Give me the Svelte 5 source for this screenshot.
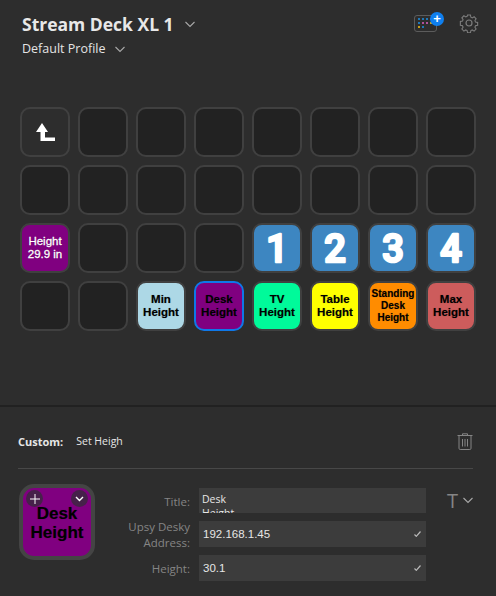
<script>
  const keys = [
    { type: 'back' }, {}, {}, {}, {}, {}, {}, {},
    {}, {}, {}, {}, {}, {}, {}, {},
    { color: '#800080', lines: ['Height', '29.9 in'], light: true }, {}, {}, {},
    { color: '#3d86c1', num: '1' }, { color: '#3d86c1', num: '2' }, { color: '#3d86c1', num: '3' }, { color: '#3d86c1', num: '4' },
    {}, {},
    { color: '#add8e6', lines: ['Min', 'Height'] },
    { color: '#800080', lines: ['Desk', 'Height'], selected: true },
    { color: '#00fa9a', lines: ['TV', 'Height'] },
    { color: '#ffff00', lines: ['Table', 'Height'] },
    { color: '#ff8c00', lines: ['Standing', 'Desk', 'Height'], small: true },
    { color: '#cd5c5c', lines: ['Max', 'Height'] }
  ];

  const dots = ['#1f78b8', '#1f78b8', '#1f78b8', '#b0509c', '#1f78b8', '#1f78b8', '#b0509c', '#b0509c', '#c8a018', '#c8a018', '#c8a018', '#1f78b8'];
</script>

<div class="app">
  <header>
    <div class="heading">
      <div class="device">
        <span>Stream Deck XL 1</span>
        <svg width="10" height="7" viewBox="0 0 10 7"><path d="M.5 1L5 5.500 9.500 1" class="chev" /></svg>
      </div>
      <div class="profile">
        <span>Default Profile</span>
        <svg width="10" height="7" viewBox="0 0 10 7"><path d="M.5 1L5 5.500 9.500 1" class="chev" /></svg>
      </div>
    </div>
    <div class="tools">
      <div class="store">
        <div class="kbd">
          {#each dots as d}
            <i style="background: {d}"></i>
          {/each}
        </div>
        <span class="plus">+</span>
      </div>
      <svg width="20" height="20" viewBox="0 0 20 20" fill="none" stroke="#7d7d7d" stroke-width="1.2">
        <circle cx="10" cy="10" r="3" />
        <path d="M8.4 1.2h3.2l.5 2.4 1.5.7 2.1-1.3 2.2 2.3-1.3 2 .6 1.6 2.4.5v3.2l-2.4.5-.6 1.6 1.3 2-2.2 2.3-2.100-1.300-1.500.7-.5 2.400H8.400l-.5-2.400-1.500-.7-2.100 1.300-2.200-2.300 1.300-2-.6-1.600-2.400-.5V8.400l2.400-.5.6-1.600-1.300-2 2.200-2.300 2.100 1.300 1.500-.7z" transform="translate(1 1) scale(.9)" />
      </svg>
    </div>
  </header>

  <div class="grid">
    {#each keys as k}
      <div class="key" class:selected={k.selected} class:filled={k.color} style={k.color ? `--fill: ${k.color}` : ''}>
        {#if k.type === 'back'}
          <svg width="19" height="18" viewBox="0 0 19 18" fill="#fff">
            <path d="M6 0l6 9H9v5.500h10V18H4.500V9H0z" />
          </svg>
        {:else if k.num}
          <svg class="num" width="46" height="46" viewBox="0 0 46 46">
            <text x="23" y="37" text-anchor="middle">{k.num}</text>
          </svg>
        {:else if k.lines}
          <span class="label" class:light={k.light} class:small={k.small}>
            {#each k.lines as line}
              <span>{line}</span>
            {/each}
          </span>
        {/if}
      </div>
    {/each}
  </div>

  <section class="inspector">
    <div class="action">
      <div class="name"><b>Custom:</b><span>Set Heigh</span></div>
      <svg width="16" height="17" viewBox="0 0 16 17" fill="none" stroke="#858585" stroke-width="1">
        <path d="M.5 2.500h15M5.500 2.500V.8h5v1.700M2 3v12.300q0 1.200 1.200 1.200h9.600q1.200 0 1.200-1.200V3M5.500 6v7.500M8 6v7.500M10.500 6v7.500" />
      </svg>
    </div>

    <div class="settings">
      <div class="preview">
        <span class="badge add">
          <svg width="10" height="10" viewBox="0 0 10 10"><path d="M5 0v10M0 5h10" stroke="#fff" stroke-width="1" /></svg>
        </span>
        <span class="badge more">
          <svg width="9" height="6" viewBox="0 0 9 6"><path d="M1 1l3.500 3.500L8 1" fill="none" stroke="#fff" stroke-width="1.400" /></svg>
        </span>
        <span class="big">Desk<br />Height</span>
      </div>

      <div class="fields">
        <div class="row first">
          <span>Title:</span>
          <div class="field title"><div class="area">Desk<br />Height</div></div>
          <div class="font">
            <span class="t">T</span>
            <svg width="10" height="7" viewBox="0 0 10 7"><path d="M.5 1L5 5.500 9.500 1" class="chev" /></svg>
          </div>
        </div>
        <div class="row">
          <span>Upsy Desky<br />Address:</span>
          <div class="field">
            192.168.1.45
            <svg width="7" height="6" viewBox="0 0 7 6"><path d="M.5 3.500l1.800 1.800L6.500.5" fill="none" stroke="#bbb" stroke-width="1.200" /></svg>
          </div>
        </div>
        <div class="row">
          <span>Height:</span>
          <div class="field">
            30.1
            <svg width="7" height="6" viewBox="0 0 7 6"><path d="M.5 3.500l1.800 1.800L6.500.5" fill="none" stroke="#bbb" stroke-width="1.200" /></svg>
          </div>
        </div>
      </div>
    </div>
  </section>
</div>

<style>
  :global(body) {
    margin: 0;
    background: #2d2d2d;
  }

  .app {
    width: 496px;
    height: 596px;
    overflow: hidden;
    background: #2d2d2d;
    color: #eee;
    font-family: "Open Sans", "Liberation Sans", sans-serif;
    display: flex;
    flex-direction: column;
  }

  .chev {
    fill: none;
    stroke: #a8a8a8;
    stroke-width: 1.1;
  }

  header {
    height: 107px;
    box-sizing: border-box;
    padding: 12px 17px 0 22px;
    display: flex;
    justify-content: space-between;
    align-items: flex-start;
  }

  .device {
    display: flex;
    align-items: center;
    gap: 11px;
    font-size: 17.500px;
    font-weight: 700;
    line-height: 24px;
    color: #e8e8e8;
  }

  .profile {
    display: flex;
    align-items: center;
    gap: 10px;
    margin-top: 3px;
    font-size: 12.500px;
    line-height: 20px;
    color: #e4e4e4;
  }

  .tools {
    display: flex;
    align-items: center;
    gap: 22px;
    margin-top: 1px;
  }

  .store {
    position: relative;
    box-sizing: border-box;
    width: 23px;
    height: 17px;
    border: 1.500px solid #5c5c5c;
    border-radius: 3px;
  }

  .kbd {
    display: grid;
    grid-template-columns: repeat(5, 2px);
    gap: 2px 2px;
    padding: 2px 0 0 3px;
  }

  .kbd i {
    display: block;
    width: 2px;
    height: 2px;
  }

  .plus {
    position: absolute;
    top: -4px;
    right: -8px;
    width: 14px;
    height: 14px;
    border-radius: 50%;
    background: #0f7fee;
    color: #fff;
    font: 700 13px/13px "Liberation Sans", sans-serif;
    text-align: center;
  }

  .grid {
    display: grid;
    grid-template-columns: repeat(8, 50px);
    grid-auto-rows: 50px;
    gap: 8px;
    padding-left: 20px;
    height: 298px;
    border-bottom: 2px solid #212121;
  }

  .key {
    box-sizing: border-box;
    width: 50px;
    height: 50px;
    border: 2px solid #404040;
    border-radius: 10px;
    background: #222;
    display: flex;
    align-items: center;
    justify-content: center;
    text-align: center;
    overflow: hidden;
  }

  .key:first-child {
    background: #2d2d2d;
  }

  .key.filled {
    background: var(--fill);
  }

  .key.selected {
    border-color: #0f78e8;
  }

  .num {
    display: block;
  }

  .num text {
    font: 500 38px Roboto, sans-serif;
    fill: #fff;
    stroke: #fff;
    stroke-width: 2.500px;
    stroke-linejoin: round;
    stroke-linecap: round;
  }

  .label {
    display: flex;
    flex-direction: column;
    font: 700 11.500px/12.700px "Liberation Sans", sans-serif;
    color: #000;
    text-shadow: 0 0 1px #0006;
  }

  .label.small {
    font-size: 10px;
    line-height: 11.700px;
  }

  .label.light {
    color: #fff;
    font-weight: 400;
    -webkit-text-stroke: .3px #fff;
  }

  .inspector {
    padding: 0 23px 0 18px;
  }

  .action {
    height: 62px;
    box-sizing: border-box;
    padding-top: 26px;
    display: flex;
    justify-content: space-between;
    align-items: flex-start;
    border-bottom: 1px solid #484848;
  }

  .name {
    display: flex;
    gap: 13px;
    font-size: 11px;
    line-height: 17px;
    color: #e6e6e6;
  }

  .name span {
    font-size: 10.500px;
  }

  .settings {
    display: flex;
    margin-top: 15px;
  }

  .preview {
    position: relative;
    flex-shrink: 0;
    box-sizing: border-box;
    width: 76px;
    height: 76px;
    margin-left: 1px;
    border: 4px solid #444;
    border-radius: 15px;
    background: #800080;
    display: flex;
    align-items: center;
    justify-content: center;
    text-align: center;
  }

  .big {
    font: 700 17px/19.500px "Liberation Sans", sans-serif;
    color: #000;
    text-shadow: 0 0 1px #0006;
    margin-top: 2px;
  }

  .badge {
    position: absolute;
    top: 2px;
    width: 17px;
    height: 17px;
    border-radius: 50%;
    background: #46214a;
    display: flex;
    align-items: center;
    justify-content: center;
    z-index: 1;
  }

  .add {
    left: 3px;
  }

  .more {
    right: 3px;
  }

  .fields {
    display: flex;
    flex-direction: column;
    gap: 8px;
    margin-top: 4px;
  }

  .row {
    display: flex;
    align-items: center;
    height: 26px;
    font-size: 11.500px;
    line-height: 16px;
    color: #858585;
  }

  .row.first {
    height: 25px;
  }

  .row > span {
    width: 95px;
    text-align: right;
    margin-right: 9px;
    padding-top: 2px;
  }

  .field {
    box-sizing: border-box;
    width: 227px;
    height: 26px;
    padding: 0 5px 0 4px;
    background: #3c3c3c;
    color: #e6e6e6;
    font: 11.500px "Liberation Sans", sans-serif;
    display: flex;
    align-items: center;
    justify-content: space-between;
  }

  .field.title {
    height: 25px;
    overflow: hidden;
    align-items: flex-start;
    padding: 4px 3px 0;
    font: 10.500px "Open Sans", sans-serif;
  }

  .area {
    line-height: 14px;
  }

  .font {
    display: flex;
    align-items: center;
    gap: 5px;
    margin-left: 21px;
  }

  .t {
    font: 400 20px/20px "Open Sans", sans-serif;
    color: #858585;
  }
</style>
